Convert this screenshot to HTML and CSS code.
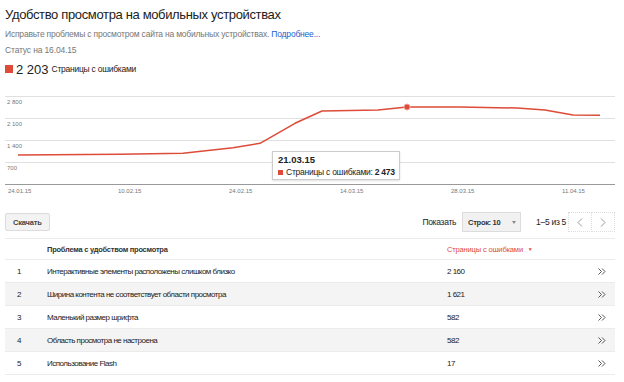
FILE: index.html
```html
<!DOCTYPE html>
<html lang="ru">
<head>
    <meta charset="UTF-8">
    <meta name="viewport" content="width=device-width, initial-scale=1.0">
    <title>Удобство просмотра на мобильных устройствах</title>
    <link rel="stylesheet" href="styles.css">
</head>
<body>
    <div class="page">
        <h1 class="title">Удобство просмотра на мобильных устройствах</h1>
        <p class="lead">Исправьте проблемы с просмотром сайта на мобильных устройствах. <a href="#">Подробнее...</a></p>
        <p class="status">Статус на 16.04.15</p>
        <div class="total">
            <span class="swatch"></span>
            <span class="total-num">2 203</span>
            <span class="total-label">Страницы с ошибками</span>
        </div>

        <div class="chart">
            <svg width="610" height="104" viewBox="5 92 610 104">
                <g class="grid">
                    <line x1="5" y1="96.5" x2="615" y2="96.5"/>
                    <line x1="5" y1="118.5" x2="615" y2="118.5"/>
                    <line x1="5" y1="140.5" x2="615" y2="140.5"/>
                    <line x1="5" y1="162.5" x2="615" y2="162.5"/>
                </g>
                <line class="axis" x1="5" y1="184.5" x2="615" y2="184.5"/>
                <g class="ylabels">
                    <text x="7" y="104">2 800</text>
                    <text x="7" y="126">2 100</text>
                    <text x="7" y="148">1 400</text>
                    <text x="7" y="170">700</text>
                </g>
                <g class="xlabels">
                    <text x="8" y="193">24.01.15</text>
                    <text x="118" y="193">10.02.15</text>
                    <text x="229" y="193">24.02.15</text>
                    <text x="340" y="193">14.03.15</text>
                    <text x="451" y="193">28.03.15</text>
                    <text x="562" y="193">11.04.15</text>
                </g>
                <polyline class="series" points="18,155 120,154.3 183,153.3 233,147.7 260,143.3 295,123.3 322,111 378,110 407,107 460,107 517,108 545,110 573,115 600,115.2"/>
                <circle class="dot" cx="407" cy="107" r="3"/>
            </svg>
            <div class="tooltip">
                <div class="tip-date">21.03.15</div>
                <div class="tip-row"><span class="tip-swatch"></span>Страницы с ошибками:&nbsp;<b>2 473</b></div>
            </div>
        </div>

        <div class="toolbar">
            <button class="btn">Скачать</button>
            <div class="pager">
                <span class="pager-label">Показать</span>
                <div class="select">Строк: 10 <span class="caret"></span></div>
                <span class="range">1–5 из 5</span>
                <div class="nav">
                    <span class="nav-btn"><svg width="6" height="9" viewBox="0 0 6 9"><polyline points="5,0.5 1,4.5 5,8.5"/></svg></span>
                    <span class="nav-btn"><svg width="6" height="9" viewBox="0 0 6 9"><polyline points="1,0.5 5,4.5 1,8.5"/></svg></span>
                </div>
            </div>
        </div>

        <div class="table">
            <div class="row head">
                <span></span>
                <span>Проблема с удобством просмотра</span>
                <span class="sorted">Страницы с ошибками <span class="sort-arrow">▼</span></span>
                <span></span>
            </div>
            <div class="row">
                <span>1</span>
                <span>Интерактивные элементы расположены слишком близко</span>
                <span>2 160</span>
                <span class="more"><svg width="8" height="7" viewBox="0 0 8 7"><polyline points="0.5,0.5 3.5,3.5 0.5,6.5"/><polyline points="4,0.5 7,3.5 4,6.5"/></svg></span>
            </div>
            <div class="row alt">
                <span>2</span>
                <span>Ширина контента не соответствует области просмотра</span>
                <span>1 621</span>
                <span class="more"><svg width="8" height="7" viewBox="0 0 8 7"><polyline points="0.5,0.5 3.5,3.5 0.5,6.5"/><polyline points="4,0.5 7,3.5 4,6.5"/></svg></span>
            </div>
            <div class="row">
                <span>3</span>
                <span>Маленький размер шрифта</span>
                <span>582</span>
                <span class="more"><svg width="8" height="7" viewBox="0 0 8 7"><polyline points="0.5,0.5 3.5,3.5 0.5,6.5"/><polyline points="4,0.5 7,3.5 4,6.5"/></svg></span>
            </div>
            <div class="row alt">
                <span>4</span>
                <span>Область просмотра не настроена</span>
                <span>582</span>
                <span class="more"><svg width="8" height="7" viewBox="0 0 8 7"><polyline points="0.5,0.5 3.5,3.5 0.5,6.5"/><polyline points="4,0.5 7,3.5 4,6.5"/></svg></span>
            </div>
            <div class="row">
                <span>5</span>
                <span>Использование Flash</span>
                <span>17</span>
                <span class="more"><svg width="8" height="7" viewBox="0 0 8 7"><polyline points="0.5,0.5 3.5,3.5 0.5,6.5"/><polyline points="4,0.5 7,3.5 4,6.5"/></svg></span>
            </div>
        </div>
    </div>
</body>
</html>
```

FILE: styles.css
```css
body {
    margin: 0;
    background: #fff;
    font-family: 'Liberation Sans', Arial, sans-serif;
    color: #222;
}
.page {
    width: 610px;
    padding: 6px 9px 0 5px;
}
.title {
    font-size: 13px;
    font-weight: normal;
    line-height: 18px;
    letter-spacing: -0.35px;
    margin: 0;
    color: #222;
}
.lead {
    font-size: 8.5px;
    line-height: 12px;
    letter-spacing: -0.2px;
    margin: 4px 0 0;
    color: #777;
}
.lead a {
    color: #1a5fd0;
    text-decoration: none;
}
.status {
    font-size: 8.5px;
    line-height: 12px;
    letter-spacing: -0.15px;
    margin: 4px 0 0;
    color: #777;
}
.total {
    display: flex;
    align-items: center;
    height: 16px;
    margin-top: 5px;
}
.swatch {
    width: 8px;
    height: 8px;
    background: #dd4b39;
    margin-right: 3px;
}
.total-num {
    font-size: 13px;
    color: #222;
    margin-right: 3px;
}
.total-label {
    font-size: 8.5px;
    letter-spacing: -0.25px;
    color: #222;
}

/* chart */
.chart {
    position: relative;
    margin-top: 15px;
    height: 104px;
}
.chart svg {
    display: block;
}
.grid line {
    stroke: #e0e0e0;
    stroke-width: 1;
}
.axis {
    stroke: #9a9a9a;
    stroke-width: 1;
}
.ylabels text, .xlabels text {
    font-family: 'Liberation Sans', Arial, sans-serif;
    font-size: 6px;
    fill: #777;
}
.series {
    fill: none;
    stroke: #dd4b39;
    stroke-width: 1.5;
    stroke-linejoin: round;
}
.dot {
    fill: #dd4b39;
    stroke: #f3a89f;
    stroke-width: 1;
}
.tooltip {
    position: absolute;
    left: 267px;
    top: 59px;
    height: 24px;
    padding: 2px 4px 1px 5px;
    white-space: nowrap;
    background: #fff;
    border: 1px solid #ccc;
    box-shadow: 0 1px 2px rgba(0, 0, 0, 0.12);
}
.tip-date {
    font-size: 9.5px;
    font-weight: bold;
    line-height: 12px;
    color: #222;
}
.tip-row {
    display: flex;
    align-items: center;
    font-size: 8.5px;
    line-height: 12px;
    letter-spacing: -0.25px;
    color: #222;
}
.tip-swatch {
    width: 5px;
    height: 5px;
    background: #dd4b39;
    margin-right: 3px;
}

/* toolbar */
.toolbar {
    display: flex;
    align-items: center;
    justify-content: space-between;
    height: 20px;
    margin-top: 16px;
}
.btn {
    height: 18px;
    padding: 0 7px;
    font-family: 'Liberation Sans', Arial, sans-serif;
    font-size: 7.5px;
    font-weight: bold;
    letter-spacing: -0.2px;
    color: #444;
    background: #f3f3f3;
    border: 1px solid #dcdcdc;
    border-radius: 2px;
}
.pager {
    display: flex;
    align-items: center;
    font-size: 8.5px;
    letter-spacing: -0.3px;
    color: #222;
}
.pager-label {
    margin-right: 6px;
}
.select {
    display: flex;
    align-items: center;
    justify-content: space-between;
    width: 48px;
    height: 18px;
    padding: 0 4px 0 5px;
    font-size: 7.5px;
    font-weight: bold;
    color: #333;
    background: #f1f1f1;
    border: 1px solid #dcdcdc;
}
.caret {
    width: 0;
    height: 0;
    border-left: 2.5px solid transparent;
    border-right: 2.5px solid transparent;
    border-top: 3px solid #888;
}
.range {
    margin-left: 15px;
    margin-right: 2px;
}
.nav {
    display: flex;
}
.nav-btn {
    display: flex;
    align-items: center;
    justify-content: center;
    width: 22px;
    height: 18px;
    border: 1px dotted #ddd;
}
.nav-btn + .nav-btn {
    border-left: none;
}
.nav-btn polyline {
    fill: none;
    stroke: #999;
    stroke-width: 1;
}

/* table */
.table {
    margin-top: 6px;
    border-top: 1px solid #ebebeb;
}
.row {
    display: grid;
    grid-template-columns: 30px 400px 151px 17px;
    align-items: center;
    height: 22px;
    padding-left: 12px;
    border-bottom: 1px solid #ebebeb;
    font-size: 8px;
    letter-spacing: -0.5px;
    color: #222;
}
.row.head {
    height: 20px;
    font-size: 7.5px;
    font-weight: bold;
    letter-spacing: -0.25px;
    color: #333;
}
.row.alt {
    background: #f4f4f4;
}
.sorted {
    color: #dd4b39;
    font-weight: normal;
    letter-spacing: -0.15px;
}
.sort-arrow {
    font-size: 5px;
    margin-left: 3px;
    vertical-align: 1px;
}
.more {
    display: flex;
    align-items: center;
}
.more polyline {
    fill: none;
    stroke: #555;
    stroke-width: 1;
}
```
